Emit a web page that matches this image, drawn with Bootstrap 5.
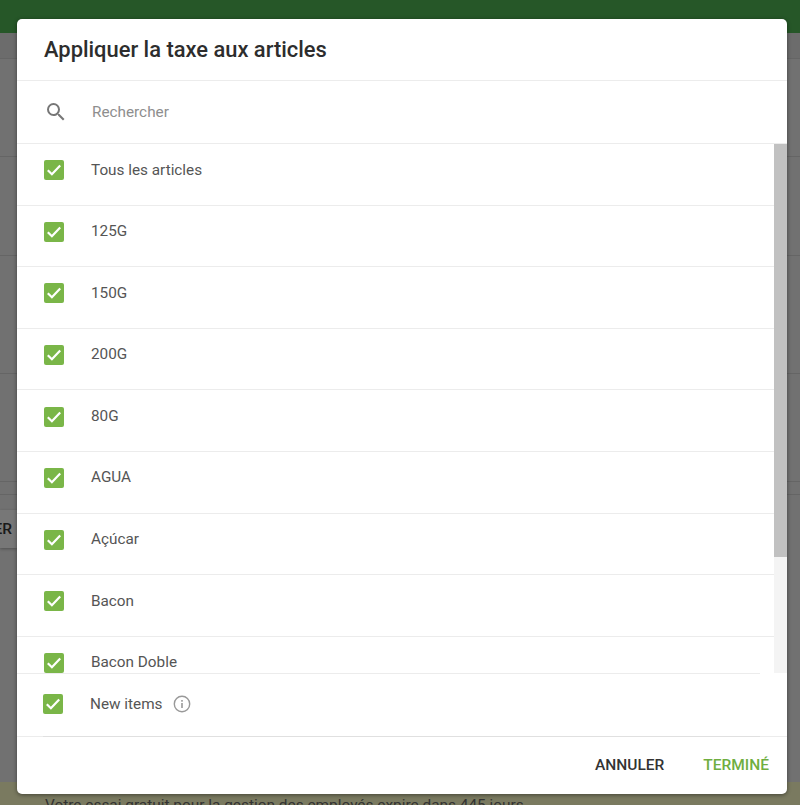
<!DOCTYPE html>
<html lang="fr">
<head>
<meta charset="utf-8">
<title>Appliquer la taxe aux articles</title>
<link rel="stylesheet" href="https://cdn.jsdelivr.net/npm/bootstrap@5.3.0/dist/css/bootstrap.min.css">
<style>
html,body{height:805px;overflow:hidden}
body{font-family:Roboto,"Liberation Sans",sans-serif;background:#fff;color:#333;position:relative}
.topband{height:33px;background:#4caf50}
.pageback{height:749px;background:#e2e2e2;display:flex;flex-direction:column}
.pageline{border-bottom:1px solid #cacaca}
.l1{height:26px;background:#d8d8d8}.l2{height:98px}.l3{height:99px}.l4{height:118px}.l5{height:108px}.l6{height:13px}
.ghostbtn{width:17px;height:38px;margin-top:15px;padding-right:5px;background:#eee;font-size:15.5px;font-weight:500;line-height:38px;color:#333;text-align:right;overflow:visible;direction:rtl;white-space:nowrap;box-shadow:0 1px 3px rgba(0,0,0,.3)}
.trialbar{height:23px;background:#f5f5c0;color:#666;font-size:15.4px;padding:14px 0 0 45px;line-height:18px;white-space:nowrap;overflow:hidden}
.shade{position:absolute;inset:0;background:rgba(0,0,0,.5)}
.dlg{position:absolute;left:17px;top:19px;width:770px;height:775px;background:#fff;border:0;border-radius:5px;box-shadow:0 1px 4px rgba(0,0,0,.45);overflow:hidden}
.dlg .modal-header{height:62px;padding:0 27px;border-bottom:1px solid #ececec;flex:none}
.dlgtitle{font-size:21.9px;font-weight:500;line-height:1;margin:0;color:#2d2d2d;position:relative;top:0}
.searchrow{height:63px;flex:none;padding:0 27px;border-bottom:1px solid #ececec;gap:24px}
.searchrow svg{flex:none;margin-top:-1px}
.searchtxt{font-size:15.3px;color:#8e8e8e;border:0;outline:0;padding:0;width:300px;height:24px;margin-top:-1px;background:transparent}
.searchtxt::placeholder{color:#8e8e8e;opacity:1}
.listarea{flex:none;height:530px;display:flex;position:relative;overflow:hidden}
.itemlist{flex:1 1 auto;overflow:hidden;height:530px;--bs-list-group-border-width:0}
.rowitem{height:61.6px;padding:0 27px;border:0;border-bottom:1px solid #ececec;border-radius:0!important;display:flex;align-items:flex-start;gap:27px;font-size:15.3px;color:#555;flex:none;background:transparent}
.box{width:20px;height:20px;background:#7ab648;border-radius:2px;flex:none;display:flex;align-items:center;justify-content:center;margin-top:16.2px}
.rowlabel{line-height:20px;margin-top:15.5px;white-space:nowrap}
.scrolltrack{width:13px;flex:none;background:#f4f4f4;height:529px}
.scrollthumb{height:413px;background:#c1c1c1}
.listend{position:absolute;left:0;right:27px;bottom:0;border-bottom:1px solid #ececec}
.newrow{height:63px;flex:none;margin:0 27px -1px 26px;padding-bottom:2px;border-bottom:1px solid #e0e0e0;display:flex;align-items:center;gap:27px;font-size:15.3px;color:#555;position:relative;z-index:1}
.newrow .box{margin-top:0;margin-left:0}
.newlabel{display:flex;align-items:center;gap:10.5px;line-height:20px;margin-top:-1px}
.dlg .modal-footer{height:58px;flex:none;padding:0 18px 0 0;border-top:1px solid #ececec;gap:39px;flex-wrap:nowrap;align-items:center}
.actbtn{font-size:15.5px;font-weight:500;padding:0;margin:0;border:0;background:none;line-height:20px;position:relative;top:-1px}
.actcancel{color:#333}
.actdone{color:#6fae3f}
</style>
</head>
<body>
<div class="topband"></div>
<div class="pageback">
  <div class="pageline l1"></div>
  <div class="pageline l2"></div>
  <div class="pageline l3"></div>
  <div class="pageline l4"></div>
  <div class="pageline l5"></div>
  <div class="pageline l6"></div>
  <div class="ghostbtn">ER</div>
</div>
<div class="trialbar">Votre essai gratuit pour la gestion des employés expire dans 445 jours</div>
<div class="shade"></div>

<div class="modal-content dlg" role="dialog">
  <div class="modal-header">
    <h5 class="dlgtitle">Appliquer la taxe aux articles</h5>
  </div>
  <div class="d-flex align-items-center searchrow">
    <svg width="24" height="24" viewBox="0 0 24 24" fill="#777"><path d="M15.5 14h-.79l-.28-.27A6.47 6.47 0 0 0 16 9.5 6.5 6.5 0 1 0 9.5 16c1.61 0 3.09-.59 4.23-1.57l.27.28v.79l5 4.99L20.49 19l-4.99-5zm-6 0C7.01 14 5 11.99 5 9.5S7.01 5 9.5 5 14 7.01 14 9.5 11.99 14 9.5 14z"/></svg>
    <input class="searchtxt" type="text" placeholder="Rechercher">
  </div>
  <div class="listarea">
    <div class="list-group itemlist">
      <div class="list-group-item rowitem"><span class="box"><svg width="14" height="12" viewBox="0 0 14 12"><path d="M.8 6.3 4.9 10.3 13.2 1.4" fill="none" stroke="#fff" stroke-width="2.2"/></svg></span><span class="rowlabel">Tous les articles</span></div>
      <div class="list-group-item rowitem"><span class="box"><svg width="14" height="12" viewBox="0 0 14 12"><path d="M.8 6.3 4.9 10.3 13.2 1.4" fill="none" stroke="#fff" stroke-width="2.2"/></svg></span><span class="rowlabel">125G</span></div>
      <div class="list-group-item rowitem"><span class="box"><svg width="14" height="12" viewBox="0 0 14 12"><path d="M.8 6.3 4.9 10.3 13.2 1.4" fill="none" stroke="#fff" stroke-width="2.2"/></svg></span><span class="rowlabel">150G</span></div>
      <div class="list-group-item rowitem"><span class="box"><svg width="14" height="12" viewBox="0 0 14 12"><path d="M.8 6.3 4.9 10.3 13.2 1.4" fill="none" stroke="#fff" stroke-width="2.2"/></svg></span><span class="rowlabel">200G</span></div>
      <div class="list-group-item rowitem"><span class="box"><svg width="14" height="12" viewBox="0 0 14 12"><path d="M.8 6.3 4.9 10.3 13.2 1.4" fill="none" stroke="#fff" stroke-width="2.2"/></svg></span><span class="rowlabel">80G</span></div>
      <div class="list-group-item rowitem"><span class="box"><svg width="14" height="12" viewBox="0 0 14 12"><path d="M.8 6.3 4.9 10.3 13.2 1.4" fill="none" stroke="#fff" stroke-width="2.2"/></svg></span><span class="rowlabel">AGUA</span></div>
      <div class="list-group-item rowitem"><span class="box"><svg width="14" height="12" viewBox="0 0 14 12"><path d="M.8 6.3 4.9 10.3 13.2 1.4" fill="none" stroke="#fff" stroke-width="2.2"/></svg></span><span class="rowlabel">Açúcar</span></div>
      <div class="list-group-item rowitem"><span class="box"><svg width="14" height="12" viewBox="0 0 14 12"><path d="M.8 6.3 4.9 10.3 13.2 1.4" fill="none" stroke="#fff" stroke-width="2.2"/></svg></span><span class="rowlabel">Bacon</span></div>
      <div class="list-group-item rowitem"><span class="box"><svg width="14" height="12" viewBox="0 0 14 12"><path d="M.8 6.3 4.9 10.3 13.2 1.4" fill="none" stroke="#fff" stroke-width="2.2"/></svg></span><span class="rowlabel">Bacon Doble</span></div>
    </div>
    <div class="scrolltrack"><div class="scrollthumb"></div></div>
    <div class="listend"></div>
  </div>
  <div class="newrow">
    <span class="box"><svg width="14" height="12" viewBox="0 0 14 12"><path d="M.8 6.3 4.9 10.3 13.2 1.4" fill="none" stroke="#fff" stroke-width="2.2"/></svg></span>
    <span class="newlabel">New items
      <svg width="18" height="18" viewBox="0 0 18 18"><circle cx="9" cy="9" r="7.7" fill="none" stroke="#999" stroke-width="1.4"/><rect x="8.2" y="8" width="1.6" height="5" fill="#999"/><rect x="8.2" y="5" width="1.6" height="1.7" fill="#999"/></svg>
    </span>
  </div>
  <div class="modal-footer">
    <button type="button" class="btn actbtn actcancel">ANNULER</button>
    <button type="button" class="btn actbtn actdone">TERMINÉ</button>
  </div>
</div>
</body>
</html>
